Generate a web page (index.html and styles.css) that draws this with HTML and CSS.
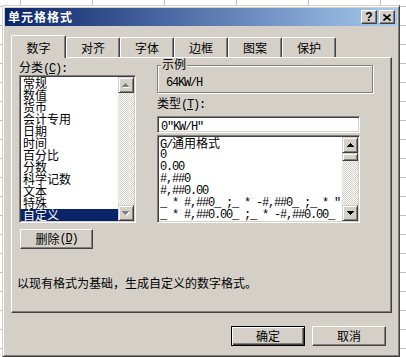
FILE: index.html
```html
<!DOCTYPE html>
<html lang="zh-CN">
<head>
<meta charset="utf-8">
<title>单元格格式</title>
<link rel="stylesheet" href="styles.css">
</head>
<body>
<div class="dialog">
  <div class="titlebar">
    <span class="title">单元格格式</span>
    <div class="tb-btns">
      <span class="tb-btn help">?</span>
      <span class="tb-btn close"><svg width="8" height="7" viewBox="0 0 8 7"><path d="M0.5 0.5 L7.5 6.5 M7.5 0.5 L0.5 6.5" stroke="#000" stroke-width="1.6" fill="none"/></svg></span>
    </div>
  </div>

  <div class="tabs">
    <div class="tab sel">数字</div>
    <div class="tab">对齐</div>
    <div class="tab">字体</div>
    <div class="tab">边框</div>
    <div class="tab">图案</div>
    <div class="tab">保护</div>
  </div>

  <div class="panel">
    <div class="cols">
      <div class="left">
        <div class="lbl lbl-cat">分类<span class="m">(<u>C</u>):</span></div>
        <div class="listbox cat">
          <div class="items">
            <div class="item">常规</div>
            <div class="item">数值</div>
            <div class="item">货币</div>
            <div class="item">会计专用</div>
            <div class="item">日期</div>
            <div class="item">时间</div>
            <div class="item">百分比</div>
            <div class="item">分数</div>
            <div class="item">科学记数</div>
            <div class="item">文本</div>
            <div class="item">特殊</div>
            <div class="item sel">自定义</div>
          </div>
          <div class="vscroll">
            <div class="sbtn dis"><svg width="8" height="5" viewBox="0 0 8 5"><path class="sh" d="M4 1h1v1h-1zM3 2h3v1h-3zM2 3h5v1h-5zM1 4h7v1h-7z"/><path class="ar" d="M3 0h1v1h-1zM2 1h3v1h-3zM1 2h5v1h-5zM0 3h7v1h-7z"/></svg></div>
            <div class="track"></div>
            <div class="sbtn dis"><svg width="8" height="5" viewBox="0 0 8 5"><path class="sh" d="M1 1h7v1h-7zM2 2h5v1h-5zM3 3h3v1h-3zM4 4h1v1h-1z"/><path class="ar" d="M0 0h7v1h-7zM1 1h5v1h-5zM2 2h3v1h-3zM3 3h1v1h-1z"/></svg></div>
          </div>
        </div>
        <div class="btn del">删除<span class="m">(<u>D</u>)</span></div>
      </div>

      <div class="right">
        <span class="legend">示例</span>
        <div class="group"><span class="m">64KW/H</span></div>
        <div class="lbl lbl-type">类型<span class="m">(<u>T</u>):</span></div>
        <div class="edit"><span class="m">0"KW/H"</span></div>
        <div class="listbox fmt">
          <div class="items">
            <div class="item"><span class="m">G/</span>通用格式</div>
            <div class="item m">0</div>
            <div class="item m">0.00</div>
            <div class="item m">#,##0</div>
            <div class="item m">#,##0.00</div>
            <div class="item m">_ * #,##0_ ;_ * -#,##0_ ;_ * "-"_ ;_ @_ </div>
            <div class="item m">_ * #,##0.00_ ;_ * -#,##0.00_ ;_ * "-"??_ ;_ @_ </div>
          </div>
          <div class="vscroll">
            <div class="sbtn"><svg width="7" height="4" viewBox="0 0 7 4"><path class="ar" d="M3 0h1v1h-1zM2 1h3v1h-3zM1 2h5v1h-5zM0 3h7v1h-7z"/></svg></div>
            <div class="sbtn thumb"></div>
            <div class="track"></div>
            <div class="sbtn"><svg width="7" height="4" viewBox="0 0 7 4"><path class="ar" d="M0 0h7v1h-7zM1 1h5v1h-5zM2 2h3v1h-3zM3 3h1v1h-1z"/></svg></div>
          </div>
        </div>
      </div>
    </div>
    <div class="desc">以现有格式为基础，生成自定义的数字格式。</div>
  </div>

  <div class="actions">
    <div class="btn default">确定</div>
    <div class="btn">取消</div>
  </div>
</div>
</body>
</html>
```

FILE: styles.css
```css
* { box-sizing: border-box; }

html, body {
  margin: 0;
  height: 100%;
  overflow: hidden;
}

body {
  padding: 5px 0 0 2px;
  background-color: #fff;
  background-image:
    linear-gradient(to right, #c0c0c0 1px, transparent 1px),
    linear-gradient(to bottom, #c0c0c0 1px, transparent 1px);
  background-size: 72px 100%, 100% 19px;
  background-position: 20px 0, 0 6px;
  font-family: "Noto Sans CJK SC", sans-serif;
  font-size: 12px;
  line-height: 12px;
  color: #000;
}

.m {
  font-family: "Liberation Mono", "Noto Sans CJK SC", monospace;
  font-size: 12px;
  letter-spacing: -1.2px;
}

.dialog {
  width: 398px;
  height: 352px;
  background: #d4d0c8;
  border: 1px solid;
  border-color: #d4d0c8 #404040 #404040 #d4d0c8;
  box-shadow: inset 1px 1px #fff, inset -1px -1px #808080;
  padding: 2px;
  display: flex;
  flex-direction: column;
}

/* title bar */
.titlebar {
  height: 18px;
  flex: none;
  background: linear-gradient(to right, #0a246a, #a6caf0);
  display: flex;
  align-items: center;
  justify-content: space-between;
  padding: 0 2px 0 3px;
}
.title {
  color: #fff;
  font-weight: bold;
  letter-spacing: 1px;
}
.tb-btns {
  display: flex;
  gap: 2px;
}
.tb-btn {
  width: 16px;
  height: 14px;
  background: #d4d0c8;
  border: 1px solid;
  border-color: #fff #404040 #404040 #fff;
  box-shadow: inset -1px -1px #808080;
  display: flex;
  align-items: center;
  justify-content: center;
}
.help {
  font-family: "Liberation Sans", sans-serif;
  font-weight: bold;
  font-size: 12px;
  line-height: 12px;
}

/* tabs */
.tabs {
  display: flex;
  align-items: flex-end;
  height: 22px;
  flex: none;
  margin: 9px 0 0 6px;
}
.tab {
  width: 54px;
  height: 20px;
  border: 1px solid;
  border-bottom: none;
  border-color: #fff #404040 transparent #fff;
  border-radius: 2px 2px 0 0;
  box-shadow: inset -1px 0 #808080;
  text-align: center;
  padding-top: 4px;
}
.tab.sel {
  width: 55px;
  height: 23px;
  margin-bottom: -1px;
  padding-top: 6px;
  position: relative;
  z-index: 1;
  background: #d4d0c8;
}

/* panel */
.panel {
  margin-left: 6px;
  width: 381px;
  height: 256px;
  flex: none;
  border: 1px solid;
  border-color: #fff #404040 #404040 #fff;
  box-shadow: inset -1px -1px #808080;
}
.cols {
  display: flex;
  align-items: flex-start;
  gap: 21px;
  margin-left: 7px;
}
.left {
  width: 117px;
  display: flex;
  flex-direction: column;
  align-items: flex-start;
}
.lbl-cat { margin-top: 3px; }

.listbox {
  display: flex;
  background: #fff;
  border: 1px solid;
  border-color: #808080 #fff #fff #808080;
  box-shadow: inset 1px 1px #404040, inset -1px -1px #d4d0c8;
  padding: 1px;
}
.cat { width: 117px; height: 148px; }
.cat .items { width: 97px; }
.fmt { width: 203px; height: 88px; margin-top: 2px; }
.fmt .items { width: 183px; }

.items { overflow: hidden; }
.item {
  height: 12px;
  line-height: 12px;
  padding-left: 2px;
  white-space: pre;
}
.fmt .item { padding-left: 1px; }
.item.sel {
  background: #0a246a;
  color: #fff;
}

.vscroll {
  width: 16px;
  display: flex;
  flex-direction: column;
  background: repeating-conic-gradient(#d4d0c8 0 25%, #fff 0 50%) 0 0 / 2px 2px;
}
.track { flex: 1; }
.sbtn {
  width: 16px;
  height: 16px;
  flex: none;
  background: #d4d0c8;
  border: 1px solid;
  border-color: #d4d0c8 #404040 #404040 #d4d0c8;
  box-shadow: inset 1px 1px #fff, inset -1px -1px #808080;
  display: flex;
  align-items: center;
  justify-content: center;
}
.sbtn svg { shape-rendering: crispEdges; }
.sbtn .ar { fill: #000; }
.sbtn.dis .ar { fill: #808080; }
.sbtn.dis .sh { fill: #fff; }
.sbtn.thumb { height: 8px; }

.btn {
  height: 20px;
  background: #d4d0c8;
  border: 1px solid;
  border-color: #fff #404040 #404040 #fff;
  box-shadow: inset -1px -1px #808080;
  display: flex;
  align-items: center;
  justify-content: center;
}
.del {
  width: 73px;
  margin: 6px 0 0 1px;
}

.right {
  width: 216px;
  display: flex;
  flex-direction: column;
  align-items: flex-start;
}
.legend {
  margin-left: 4px;
  padding: 0 1px;
  background: #d4d0c8;
  position: relative;
  z-index: 1;
  line-height: 12px;
}
.group {
  width: 216px;
  height: 28px;
  margin-top: -5px;
  border: 1px solid #808080;
  box-shadow: inset 1px 1px #fff, 1px 1px #fff;
  padding: 9px 0 0 8px;
  line-height: 12px;
}
.lbl-type { margin-top: 4px; }
.edit {
  width: 203px;
  height: 17px;
  margin-top: 5px;
  background: #fff;
  border: 1px solid;
  border-color: #808080 #fff #fff #808080;
  box-shadow: inset 1px 1px #404040, inset -1px -1px #d4d0c8;
  padding: 2px 0 0 3px;
  line-height: 12px;
  white-space: pre;
}

.desc {
  margin: 28px 0 0 5px;
  line-height: 12px;
}

/* bottom buttons */
.actions {
  display: flex;
  justify-content: flex-end;
  gap: 7px;
  margin: 13px 11px 0 0;
}
.actions .btn { width: 74px; }
.btn.default {
  border: 1px solid #000;
  box-shadow: inset 1px 1px #fff, inset -1px -1px #404040, inset -2px -2px #808080;
}
```
